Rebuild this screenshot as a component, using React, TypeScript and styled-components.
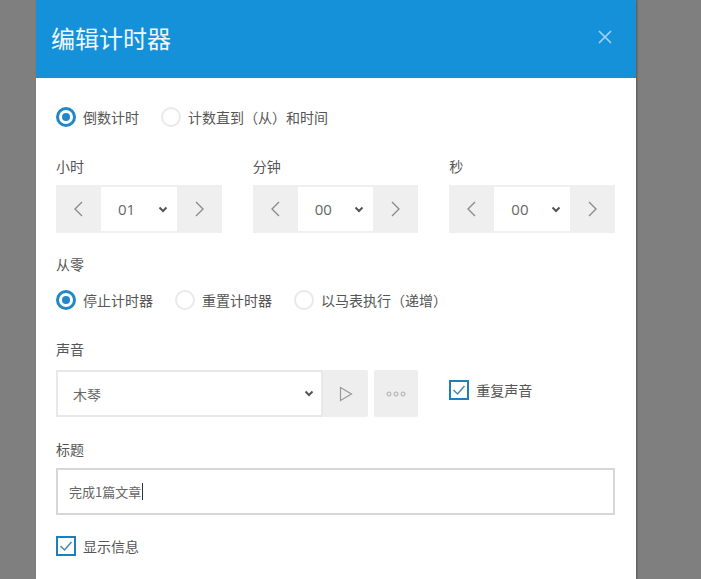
import React from 'react'
import styled, { createGlobalStyle, css } from 'styled-components'

const GlobalStyle = createGlobalStyle`
  html, body {
    margin: 0;
    padding: 0;
    background: #7f7f7f;
    overflow: hidden;
  }
  body {
    font-family: "Noto Sans CJK SC", "Noto Sans", sans-serif;
    color: #555;
  }
`

const Dialog = styled.div`
  margin-left: 36px;
  width: 600px;
  height: 579px;
  background: #fff;
  box-shadow: 1px 0 2px rgba(0, 0, 0, 0.35);
`

const Header = styled.div`
  height: 78px;
  background: #1591d9;
  display: flex;
  align-items: center;
  justify-content: space-between;
  padding: 0 24px 0 15px;
  box-sizing: border-box;
`

const Title = styled.h1`
  margin: 0;
  font-size: 24px;
  font-weight: 400;
  color: #eef7fd;
  line-height: 1;
  padding-bottom: 2px;
`

const CloseButton = styled.button`
  border: none;
  background: none;
  padding: 0;
  width: 14px;
  height: 14px;
  margin-bottom: 5px;
  display: flex;
  cursor: pointer;
`

const Body = styled.div`
  padding: 29px 21px 0 20px;
`

const RadioRow = styled.div<{ mb?: number }>`
  display: flex;
  align-items: center;
  gap: 22px;
  margin-bottom: ${(p) => p.mb ?? 0}px;
`

const RadioItem = styled.label`
  display: flex;
  align-items: center;
  gap: 7px;
  font-size: 14px;
  line-height: 20px;
  color: #555;
  cursor: pointer;
`

const RadioCircle = styled.span<{ checked?: boolean }>`
  width: 20px;
  height: 20px;
  box-sizing: border-box;
  border-radius: 50%;
  border: 2px solid #e9e9e9;
  display: flex;
  align-items: center;
  justify-content: center;
  ${(p) =>
    p.checked &&
    css`
      border: 3px solid #2287c7;
      &::after {
        content: '';
        width: 8px;
        height: 8px;
        border-radius: 50%;
        background: #2287c7;
      }
    `}
`

const Label = styled.div`
  font-size: 14px;
  line-height: 20px;
  color: #555;
  margin-bottom: 9px;
`

const Grid = styled.div<{ mb?: number }>`
  display: grid;
  grid-template-columns: repeat(3, 1fr);
  column-gap: 31px;
  margin-bottom: ${(p) => p.mb ?? 0}px;
`

const Spinner = styled.div`
  display: flex;
  height: 48px;
  background: #efefef;
  padding: 2px 0;
  box-sizing: border-box;
`

const StepButton = styled.button`
  width: 45px;
  flex: none;
  border: none;
  background: transparent;
  padding: 0;
  display: flex;
  align-items: center;
  justify-content: center;
  cursor: pointer;
`

const SelectBox = styled.div<{ bordered?: boolean }>`
  flex: 1;
  background: #fff;
  display: flex;
  align-items: center;
  justify-content: space-between;
  box-sizing: border-box;
  padding: 0 9px 0 17px;
  font-family: "Open Sans", "Noto Sans CJK SC", sans-serif;
  font-size: 15px;
  color: #666;
  ${(p) =>
    p.bordered &&
    css`
      border: 2px solid #e8e8e8;
      padding: 0 7px 0 15px;
      font-family: "Noto Sans CJK SC", sans-serif;
      font-size: 14px;
    `}
`

const SoundRow = styled.div`
  grid-column: span 2;
  display: flex;
  height: 47px;
`

const GrayButton = styled.button<{ ml?: number; w: number }>`
  width: ${(p) => p.w}px;
  flex: none;
  border: none;
  background: #eeeeee;
  border-radius: 2px;
  margin-left: ${(p) => p.ml ?? 0}px;
  padding: 0;
  display: flex;
  align-items: center;
  justify-content: center;
  cursor: pointer;
`

const CheckItem = styled.label<{ mt?: number }>`
  display: flex;
  align-items: center;
  gap: 7px;
  font-size: 14px;
  line-height: 20px;
  color: #555;
  align-self: start;
  margin-top: ${(p) => p.mt ?? 0}px;
`

const CheckBox = styled.span`
  width: 20px;
  height: 20px;
  box-sizing: border-box;
  border: 2px solid #1c80bd;
  display: flex;
  align-items: center;
  justify-content: center;
  background: #fff;
`

const TextField = styled.div`
  height: 47px;
  border: 2px solid #d7d7d7;
  box-sizing: border-box;
  display: flex;
  align-items: center;
  padding: 0 11px;
  font-size: 13px;
  color: #666;
  margin-bottom: 21px;
`

const Caret = styled.span`
  width: 1px;
  height: 17px;
  background: #333;
  margin-left: 1px;
`

const Chevron = () => (
  <svg width="10" height="7" viewBox="0 0 10 7">
    <polyline points="1.5,1.5 5,5 8.5,1.5" fill="none" stroke="#555" strokeWidth="2" />
  </svg>
)

const Arrow = ({ right }: { right?: boolean }) => (
  <svg width="9" height="16" viewBox="0 0 9 16">
    <polyline
      points={right ? '1,1 8,8 1,15' : '8,1 1,8 8,15'}
      fill="none"
      stroke="#888"
      strokeWidth="1.3"
    />
  </svg>
)

const Check = () => (
  <svg width="14" height="12" viewBox="0 0 14 12">
    <polyline points="1.5,6 5.5,10 12.5,2" fill="none" stroke="#4d86ad" strokeWidth="1.5" />
  </svg>
)

const TimeSpinner = ({ label, value }: { label: string; value: string }) => (
  <div>
    <Label>{label}</Label>
    <Spinner>
      <StepButton>
        <Arrow />
      </StepButton>
      <SelectBox>
        <span>{value}</span>
        <Chevron />
      </SelectBox>
      <StepButton>
        <Arrow right />
      </StepButton>
    </Spinner>
  </div>
)

const Radio = ({ text, checked }: { text: string; checked?: boolean }) => (
  <RadioItem>
    <RadioCircle checked={checked} />
    {text}
  </RadioItem>
)

export default function App() {
  return (
    <>
      <GlobalStyle />
      <Dialog>
        <Header>
          <Title>编辑计时器</Title>
          <CloseButton>
            <svg width="14" height="14" viewBox="0 0 14 14">
              <path d="M1 1 L13 13 M13 1 L1 13" stroke="#a6d5f3" strokeWidth="1.6" />
            </svg>
          </CloseButton>
        </Header>
        <Body>
          <RadioRow mb={29}>
            <Radio text="倒数计时" checked />
            <Radio text="计数直到（从）和时间" />
          </RadioRow>

          <Grid mb={21}>
            <TimeSpinner label="小时" value="01" />
            <TimeSpinner label="分钟" value="00" />
            <TimeSpinner label="秒" value="00" />
          </Grid>

          <Label style={{ marginBottom: 16 }}>从零</Label>
          <RadioRow mb={29}>
            <Radio text="停止计时器" checked />
            <Radio text="重置计时器" />
            <Radio text="以马表执行（递增）" />
          </RadioRow>

          <Label style={{ marginBottom: 11 }}>声音</Label>
          <Grid mb={22}>
            <SoundRow>
              <SelectBox bordered>
                <span>木琴</span>
                <Chevron />
              </SelectBox>
              <GrayButton w={45}>
                <svg width="14" height="16" viewBox="0 0 14 16">
                  <polygon points="1.5,1.5 12.5,8 1.5,14.5" fill="none" stroke="#999" strokeWidth="1.2" />
                </svg>
              </GrayButton>
              <GrayButton w={44} ml={6}>
                <svg width="20" height="6" viewBox="0 0 20 6">
                  <circle cx="3" cy="3" r="2" fill="none" stroke="#aaa" strokeWidth="1" />
                  <circle cx="10" cy="3" r="2" fill="none" stroke="#aaa" strokeWidth="1" />
                  <circle cx="17" cy="3" r="2" fill="none" stroke="#aaa" strokeWidth="1" />
                </svg>
              </GrayButton>
            </SoundRow>
            <CheckItem mt={10}>
              <CheckBox>
                <Check />
              </CheckBox>
              重复声音
            </CheckItem>
          </Grid>

          <Label>标题</Label>
          <TextField>
            完成1篇文章
            <Caret />
          </TextField>

          <CheckItem>
            <CheckBox>
              <Check />
            </CheckBox>
            显示信息
          </CheckItem>
        </Body>
      </Dialog>
    </>
  )
}
